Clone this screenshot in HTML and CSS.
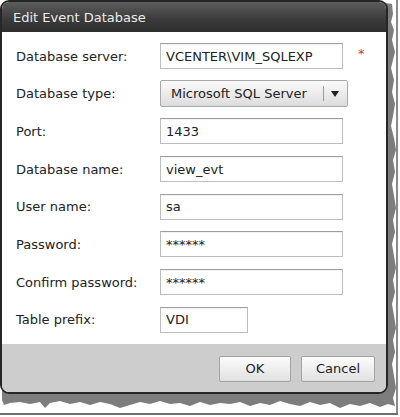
FILE: index.html
```html
<!DOCTYPE html>
<html>
<head>
<meta charset="utf-8">
<link rel="stylesheet" href="styles.css">
</head>
<body>
<div class="page">
  <svg class="torn" width="400" height="417" viewBox="0 0 400 417">
    <polygon fill="#7d7d7d" points="380,2 392,4 393,14 391,22 394,30 392,40 395,52 393,60 391,68 394,80 392,92 395,104 393,116 391,126 394,138 396,150 393,160 395,172 392,184 394,196 396,208 393,220 395,232 392,244 394,256 396,268 393,280 395,292 392,304 394,316 396,328 393,340 395,352 392,364 394,376 396,388 393,398 395,406 388,404 380,407 370,403 360,406 350,404 340,408 330,403 320,405 310,402 300,406 290,404 280,401 270,405 260,403 250,406 240,402 230,404 220,403 210,405 200,402 190,406 180,403 170,404 160,401 150,404 140,402 130,405 120,408 110,404 100,402 90,405 80,402 70,404 60,401 50,403 45,408 40,402 30,404 20,402 10,403 4,405 2,400 2,380 380,380"/>
    <rect x="396" y="0" width="2" height="415" fill="#8a8a8a"/>
    <rect x="0" y="413" width="398" height="2" fill="#6e6e6e"/>
  </svg>
  <div class="dialog">
    <div class="titlebar">Edit Event Database</div>
    <div class="form">
      <label class="lbl">Database server:</label>
      <input class="field" type="text" value="VCENTER\VIM_SQLEXP">
      <span class="req">*</span>

      <label class="lbl">Database type:</label>
      <div class="select">
        <span class="select-text">Microsoft SQL Server</span>
        <span class="select-sep"></span>
        <span class="select-arrow"></span>
      </div>
      <span></span>

      <label class="lbl">Port:</label>
      <input class="field" type="text" value="1433">
      <span></span>

      <label class="lbl">Database name:</label>
      <input class="field" type="text" value="view_evt">
      <span></span>

      <label class="lbl">User name:</label>
      <input class="field" type="text" value="sa">
      <span></span>

      <label class="lbl">Password:</label>
      <input class="field" type="text" value="******">
      <span></span>

      <label class="lbl">Confirm password:</label>
      <input class="field" type="text" value="******">
      <span></span>

      <label class="lbl">Table prefix:</label>
      <input class="field short" type="text" value="VDI">
      <span></span>
    </div>
    <div class="footer">
      <button class="btn ok">OK</button>
      <button class="btn cancel">Cancel</button>
    </div>
  </div>
</div>
</body>
</html>
```

FILE: styles.css
```css
html, body {
  margin: 0;
  padding: 0;
  background: #ffffff;
}

.page {
  position: relative;
  width: 400px;
  height: 417px;
  overflow: hidden;
  font-family: "DejaVu Sans", Verdana, sans-serif;
  font-size: 13px;
  color: #222;
}

.torn {
  position: absolute;
  left: 0;
  top: 0;
}

.dialog {
  position: relative;
  width: 388px;
  height: 394px;
  box-sizing: border-box;
  border: 2px solid #262626;
  border-radius: 9px;
  overflow: hidden;
  display: flex;
  flex-direction: column;
  background: #fff;
}

.titlebar {
  height: 30px;
  flex: none;
  display: flex;
  align-items: center;
  padding-left: 11px;
  color: #ececec;
  background: linear-gradient(#5c5c5c, #3a3a3a 60%, #2e2e2e);
  font-size: 13px;
}

.form {
  flex: none;
  display: grid;
  grid-template-columns: 144px 188px auto;
  grid-auto-rows: 26px;
  row-gap: 11.7px;
  align-items: center;
  padding: 11px 0 11px 14px;
  background: #fff;
}

.lbl {
  color: #222;
  font-size: 13px;
}

.field {
  width: 183px;
  height: 26px;
  box-sizing: border-box;
  margin: 0;
  border: 1px solid #bdbdbd;
  border-top-color: #9e9e9e;
  box-shadow: inset 0 1px 1px rgba(0,0,0,0.06);
  padding: 0 5px;
  font-family: "DejaVu Sans", Verdana, sans-serif;
  font-size: 13px;
  color: #222;
  background: #fff;
  outline: none;
}

.field.short {
  width: 88px;
}

.req {
  color: #d8333a;
  font-size: 13px;
  padding-left: 10px;
  align-self: start;
  margin-top: 3px;
}

.select {
  width: 188px;
  height: 27px;
  box-sizing: border-box;
  border: 1px solid #a9a9a9;
  border-radius: 2px;
  background: linear-gradient(#fbfbfb, #eaeaea 55%, #dcdcdc);
  display: flex;
  align-items: center;
  padding-left: 10px;
}

.select-text {
  width: 152px;
  color: #222;
}

.select-sep {
  width: 1px;
  height: 15px;
  background: #9a9a9a;
}

.select-arrow {
  margin-left: 7px;
  width: 0;
  height: 0;
  border-left: 4px solid transparent;
  border-right: 4px solid transparent;
  border-top: 6px solid #222;
}

.footer {
  flex: 1;
  background: #cdcdcd;
  display: flex;
  justify-content: flex-end;
  align-items: flex-start;
  gap: 10px;
  padding: 12px 11px 0 0;
}

.btn {
  height: 26px;
  box-sizing: border-box;
  border: 1px solid #a3a3a3;
  border-radius: 2px;
  background: linear-gradient(#fcfcfc, #ededed 55%, #e0e0e0);
  font-family: "DejaVu Sans", Verdana, sans-serif;
  font-size: 13px;
  color: #222;
  padding: 0;
}

.btn.ok {
  width: 72px;
}

.btn.cancel {
  width: 74px;
}
```
